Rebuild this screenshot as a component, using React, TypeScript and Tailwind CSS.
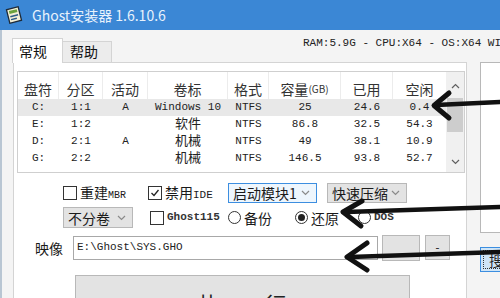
import React from "react";

// Table content
const rows = [
  { drive: "C:", part: "1:1", active: "A", label: "Windows 10", fs: "NTFS", size: "25", used: "24.6", free: "0.4", selected: true },
  { drive: "E:", part: "1:2", active: "", label: "软件", fs: "NTFS", size: "86.8", used: "32.5", free: "54.3", selected: false },
  { drive: "D:", part: "2:1", active: "A", label: "机械", fs: "NTFS", size: "49", used: "38.1", free: "10.9", selected: false },
  { drive: "G:", part: "2:2", active: "", label: "机械", fs: "NTFS", size: "146.5", used: "93.8", free: "52.7", selected: false },
];

const cols = "grid grid-cols-[41px_44px_45px_80px_41px_72px_52px_53px]";
const cjk = "font-['Noto_Sans_CJK_SC',sans-serif]";
const mono = "font-['Liberation_Mono','Noto_Sans_CJK_SC',monospace]";

function Chevron({ up = false, color = "#8a8a8a" }: { up?: boolean; color?: string }) {
  return (
    <svg width="9" height="6" viewBox="0 0 9 6">
      <path d={up ? "M1 5 L4.5 1.5 L8 5" : "M1 1 L4.5 4.5 L8 1"} fill="none" stroke={color} strokeWidth="1.2" />
    </svg>
  );
}

function CheckBox({ checked, children }: { checked?: boolean; children: React.ReactNode }) {
  return (
    <div className="flex items-center gap-[3px]">
      <span className="w-[14px] h-[14px] shrink-0 border border-[#333] bg-white flex items-center justify-center">
        {checked && (
          <svg width="10" height="10" viewBox="0 0 10 10">
            <path d="M1.5 5 L4 7.5 L8.5 2" fill="none" stroke="#222" strokeWidth="1.3" />
          </svg>
        )}
      </span>
      {children}
    </div>
  );
}

function Radio({ checked, children }: { checked?: boolean; children: React.ReactNode }) {
  return (
    <div className="flex items-center gap-[3px]">
      <span className="w-[13px] h-[13px] shrink-0 rounded-full border border-[#333] bg-white flex items-center justify-center">
        {checked && <span className="w-[7px] h-[7px] rounded-full bg-[#222]" />}
      </span>
      {children}
    </div>
  );
}

function Select({ text, focused, w }: { text: string; focused?: boolean; w: string }) {
  return (
    <div
      className={`${w} shrink-0 h-full flex items-center justify-between pl-[4px] pr-[6px] border ${
        focused ? "border-[#3c8ee0] bg-[#eef6fd]" : "border-[#b8b8b8] bg-[#e3e3e3]"
      }`}
    >
      <span className={`${cjk} text-[14px] leading-none text-[#1a1a1a]`}>{text}</span>
      <Chevron />
    </div>
  );
}

export default function App() {
  return (
    <div className="relative w-[500px] h-[298px] overflow-hidden flex flex-col bg-[#f4f4f4]">
      {/* TITLE BAR */}
      <div className="h-[30px] flex items-center bg-[#3b87d5] pl-[5px] shrink-0">
        <svg width="18" height="18" viewBox="0 0 18 18">
          <g transform="rotate(-14 9 9)">
            <rect x="3" y="2" width="12" height="14" fill="#f3efd6" stroke="#1d2a38" strokeWidth="1.3" />
            <rect x="5" y="4" width="8" height="3" fill="#6aa23c" />
            <rect x="5" y="9" width="8" height="1.5" fill="#2c5b86" />
            <rect x="5" y="12" width="6" height="1.5" fill="#2c5b86" />
          </g>
        </svg>
        <span className={`${cjk} ml-[9px] text-[14px] leading-none text-[#e8f2fc]`}>Ghost安装器 1.6.10.6</span>
      </div>

      <div className="flex-1 flex flex-col border-l-2 border-[#b9c6d3]">
        {/* TABS + SYSTEM INFO */}
        <div className="h-[32px] flex items-end pl-[10px] shrink-0">
          <div className={`${cjk} shrink-0 relative z-10 -mb-px w-[51px] h-[25px] bg-white border border-b-0 border-[#d4d4d4] pl-[6px] pt-[4px] text-[14px] leading-[16px] text-[#111]`}>
            常规
          </div>
          <div className={`${cjk} shrink-0 w-[49px] h-[21px] bg-[#ececec] border border-l-0 border-b-0 border-[#d4d4d4] pl-[7px] pt-[1px] text-[14px] leading-[16px] text-[#111]`}>
            帮助
          </div>
          <span className={`${mono} shrink-0 self-start mt-[6px] ml-[191px] text-[11px] leading-[14px] text-[#222] whitespace-nowrap`}>
            RAM:5.9G - CPU:X64 - OS:X64 WIN10
          </span>
        </div>

        <div className="flex flex-1">
          <div className="w-[11px] shrink-0" />

          {/* MAIN PANEL */}
          <div className="w-[454px] shrink-0 border-t border-x border-[#d4d4d4] bg-white flex flex-col">
            {/* Partition table */}
            <div className="ml-[3px] mt-[8px] w-[448px] h-[102px] shrink-0 border border-[#cfcfcf] flex">
              <div className="w-[428px]">
                <div className={`${cols} h-[27px]`}>
                  {["盘符", "分区", "活动", "卷标", "格式"].map((h) => (
                    <div key={h} className={`${cjk} border-r border-[#ececec] flex items-center justify-center pt-[6px] text-[14px] leading-none text-[#333]`}>
                      {h}
                    </div>
                  ))}
                  <div className={`${cjk} border-r border-[#ececec] flex items-center justify-center pt-[6px] text-[14px] leading-none text-[#333]`}>
                    容量<span className="text-[10px]">(GB)</span>
                  </div>
                  <div className={`${cjk} border-r border-[#ececec] flex items-center justify-center pt-[6px] text-[14px] leading-none text-[#333]`}>已用</div>
                  <div className={`${cjk} flex items-center justify-center pt-[6px] text-[14px] leading-none text-[#333]`}>空闲</div>
                </div>
                {rows.map((r) => (
                  <div
                    key={r.drive}
                    className={`${cols} ${mono} h-[17px] items-center text-center text-[11px] leading-none text-[#222] ${r.selected ? "bg-[#e8e8e8]" : ""}`}
                  >
                    <span>{r.drive}</span>
                    <span>{r.part}</span>
                    <span>{r.active}</span>
                    <span className={r.label.startsWith("W") ? "" : "text-[13px]"}>{r.label}</span>
                    <span>{r.fs}</span>
                    <span>{r.size}</span>
                    <span>{r.used}</span>
                    <span>{r.free}</span>
                  </div>
                ))}
              </div>
              {/* Scrollbar */}
              <div className="w-[18px] bg-[#f0f0f0] flex flex-col">
                <div className="h-[26px] flex items-end justify-center pb-[9px]">
                  <Chevron up color="#606060" />
                </div>
                <div className="h-[34px] mx-[1px] bg-[#cdcdcd]" />
                <div className="flex-1" />
                <div className="h-[20px] flex items-center justify-center">
                  <Chevron color="#606060" />
                </div>
              </div>
            </div>

            {/* Options row 1 */}
            <div className="mt-[10px] h-[20px] shrink-0 flex items-center pl-[49px]">
              <div className="w-[85px] shrink-0">
                <CheckBox>
                  <span className={`${cjk} text-[14px] leading-none text-[#1a1a1a]`}>
                    重建<span className={`${mono} text-[10px]`}>MBR</span>
                  </span>
                </CheckBox>
              </div>
              <div className="w-[80px] shrink-0">
                <CheckBox checked>
                  <span className={`${cjk} text-[14px] leading-none text-[#1a1a1a]`}>
                    禁用<span className={`${mono} text-[11px]`}>IDE</span>
                  </span>
                </CheckBox>
              </div>
              <Select text="启动模块1" focused w="w-[89px]" />
              <div className="w-[10px] shrink-0" />
              <Select text="快速压缩" w="w-[80px]" />
            </div>

            {/* Options row 2 */}
            <div className="mt-[4px] h-[21px] shrink-0 flex items-center pl-[49px]">
              <Select text="不分卷" w="w-[70px]" />
              <div className="w-[17px] shrink-0" />
              <div className="w-[78px] shrink-0">
                <CheckBox>
                  <span className={`${mono} text-[11px] font-bold leading-none text-[#333]`}>Ghost115</span>
                </CheckBox>
              </div>
              <div className="w-[67px] shrink-0">
                <Radio>
                  <span className={`${cjk} text-[14px] leading-none text-[#1a1a1a]`}>备份</span>
                </Radio>
              </div>
              <div className="w-[63px] shrink-0">
                <Radio checked>
                  <span className={`${cjk} text-[14px] leading-none text-[#1a1a1a]`}>还原</span>
                </Radio>
              </div>
              <Radio>
                <span className={`${mono} text-[11px] font-bold leading-none text-[#333]`}>DOS</span>
              </Radio>
            </div>

            {/* Image path row */}
            <div className="mt-[7px] h-[25px] shrink-0 flex items-center pl-[21px]">
              <span className={`${cjk} w-[38px] shrink-0 text-[14px] leading-none text-[#1a1a1a]`}>映像</span>
              <div className={`${mono} w-[305px] shrink-0 h-[24px] border border-[#a8a8a8] bg-white flex items-center pl-[3px] text-[11px] text-[#222]`}>
                E:\Ghost\SYS.GHO
              </div>
              <div className="ml-[4px] w-[38px] shrink-0 h-[26px] bg-[#e3e3e3] border border-[#b8b8b8] flex items-end justify-center pb-[3px] text-[11px] leading-none text-[#333]">
                ...
              </div>
              <div className="ml-[5px] w-[25px] shrink-0 h-[25px] bg-[#e3e3e3] border border-[#b8b8b8] flex items-center justify-center text-[12px] leading-none text-[#333]">
                -
              </div>
            </div>

            {/* Execute button */}
            <div className={`${cjk} mt-[15px] ml-[61px] w-[335px] h-[40px] shrink-0 bg-[#e3e3e3] border border-[#b8b8b8] flex justify-center pt-[15px] text-[22px] leading-[24px] text-[#222]`}>
              执　　行
            </div>
          </div>

          {/* RIGHT COLUMN */}
          <div className="flex-1 flex flex-col">
            <div className="ml-[13px] h-[171px] shrink-0 border border-[#b8b8b8] bg-white" />
            <div className="mt-[14px] ml-[13px] h-[25px] shrink-0 bg-[#cfe5f7] border border-[#3c8ee0] p-[2px]">
              <div className={`${cjk} h-full border border-dotted border-[#333] pl-[5px] text-[14px] leading-[18px] text-[#222] whitespace-nowrap`}>
                搜索
              </div>
            </div>
          </div>
        </div>
      </div>

      {/* ANNOTATION ARROWS */}
      <svg className="absolute inset-0 pointer-events-none" width="500" height="298" viewBox="0 0 500 298">
        <g fill="none" stroke="#111" strokeLinecap="round" strokeLinejoin="round">
          <path d="M500 102 L436 105" strokeWidth="4.5" />
          <path d="M449 93 L434 105.5 L449 118" strokeWidth="5" />
          <path d="M500 207 L346 212" strokeWidth="4.5" />
          <path d="M362 201 L343 212 L361 226" strokeWidth="5" />
          <path d="M500 252 L350 257" strokeWidth="4.5" />
          <path d="M367 243 L347 257 L367 270" strokeWidth="5" />
        </g>
      </svg>
    </div>
  );
}
